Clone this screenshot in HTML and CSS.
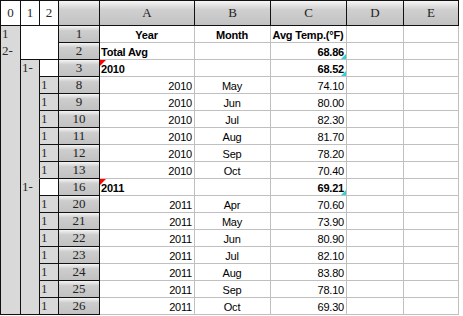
FILE: index.html
```html
<!DOCTYPE html>
<html lang="en">
<head>
    <meta charset="UTF-8">
    <title>Avg Temp</title>
    <link rel="stylesheet" href="styles.css">
</head>
<body>
    <div class="sheet">
        <!-- header row -->
        <div class="lvl">0</div>
        <div class="lvl">1</div>
        <div class="lvl">2</div>
        <div class="hd"></div>
        <div class="hd">A</div>
        <div class="hd">B</div>
        <div class="hd">C</div>
        <div class="hd">D</div>
        <div class="hd">E</div>

        <!-- outline blocks -->
        <div class="ol ol0"><span>1</span><span>2-</span></div>
        <div class="blank top-blank"></div>
        <div class="ol ol1 grp1"><span>1-</span></div>
        <div class="ol ol1 grp2"><span>1-</span></div>

        <!-- sheet row 1 -->
        <div class="rh">1</div>
        <div class="c b m">Year</div>
        <div class="c b m">Month</div>
        <div class="c b m">Avg Temp.(°F)</div>
        <div class="c"></div>
        <div class="c"></div>

        <!-- 2 -->
        <div class="rh">2</div>
        <div class="c b">Total Avg</div>
        <div class="c"></div>
        <div class="c b r tag">68.86</div>
        <div class="c"></div>
        <div class="c"></div>

        <!-- 3 -->
        <div class="blank lv2"></div>
        <div class="rh">3</div>
        <div class="c b note">2010</div>
        <div class="c"></div>
        <div class="c b r tag">68.52</div>
        <div class="c"></div>
        <div class="c"></div>

        <div class="ol lv2">1</div><div class="rh">8</div>
        <div class="c r">2010</div><div class="c m">May</div><div class="c r">74.10</div><div class="c"></div><div class="c"></div>

        <div class="ol lv2">1</div><div class="rh">9</div>
        <div class="c r">2010</div><div class="c m">Jun</div><div class="c r">80.00</div><div class="c"></div><div class="c"></div>

        <div class="ol lv2">1</div><div class="rh">10</div>
        <div class="c r">2010</div><div class="c m">Jul</div><div class="c r">82.30</div><div class="c"></div><div class="c"></div>

        <div class="ol lv2">1</div><div class="rh">11</div>
        <div class="c r">2010</div><div class="c m">Aug</div><div class="c r">81.70</div><div class="c"></div><div class="c"></div>

        <div class="ol lv2">1</div><div class="rh">12</div>
        <div class="c r">2010</div><div class="c m">Sep</div><div class="c r">78.20</div><div class="c"></div><div class="c"></div>

        <div class="ol lv2">1</div><div class="rh">13</div>
        <div class="c r">2010</div><div class="c m">Oct</div><div class="c r">70.40</div><div class="c"></div><div class="c"></div>

        <!-- 16 -->
        <div class="blank lv2"></div>
        <div class="rh">16</div>
        <div class="c b note">2011</div>
        <div class="c"></div>
        <div class="c b r tag">69.21</div>
        <div class="c"></div>
        <div class="c"></div>

        <div class="ol lv2">1</div><div class="rh">20</div>
        <div class="c r">2011</div><div class="c m">Apr</div><div class="c r">70.60</div><div class="c"></div><div class="c"></div>

        <div class="ol lv2">1</div><div class="rh">21</div>
        <div class="c r">2011</div><div class="c m">May</div><div class="c r">73.90</div><div class="c"></div><div class="c"></div>

        <div class="ol lv2">1</div><div class="rh">22</div>
        <div class="c r">2011</div><div class="c m">Jun</div><div class="c r">80.90</div><div class="c"></div><div class="c"></div>

        <div class="ol lv2">1</div><div class="rh">23</div>
        <div class="c r">2011</div><div class="c m">Jul</div><div class="c r">82.10</div><div class="c"></div><div class="c"></div>

        <div class="ol lv2">1</div><div class="rh">24</div>
        <div class="c r">2011</div><div class="c m">Aug</div><div class="c r">83.80</div><div class="c"></div><div class="c"></div>

        <div class="ol lv2">1</div><div class="rh">25</div>
        <div class="c r">2011</div><div class="c m">Sep</div><div class="c r">78.10</div><div class="c"></div><div class="c"></div>

        <div class="ol lv2">1</div><div class="rh">26</div>
        <div class="c r">2011</div><div class="c m">Oct</div><div class="c r">69.30</div><div class="c"></div><div class="c"></div>
    </div>
</body>
</html>
```

FILE: styles.css
```css
*{
    margin: 0;
    padding: 0;
    box-sizing: border-box;
}
body{
    background: #fff;
}
.sheet{
    display: grid;
    grid-template-columns: 20px 19px 19px 41px 95px 76px 76px 57px 55px;
    grid-template-rows: 25px repeat(17, 17px);
    width: max-content;
    border-left: 1px solid #111;
    border-top: 1px solid #111;
}
.sheet > div{
    border-right: 1px solid #111;
    border-bottom: 1px solid #111;
    overflow: hidden;
    white-space: nowrap;
}

/* outline level buttons + column headers */
.lvl{
    background: #fff;
    font: 13px "Liberation Serif", serif;
    color: #2a2a2a;
    text-align: center;
    line-height: 24px;
}
.hd{
    background: linear-gradient(#f6f6f6, #d0d0d0 35%, #c2c2c2);
    font: 13px "Liberation Serif", serif;
    color: #222;
    text-align: center;
    line-height: 24px;
}

/* outline area */
.ol{
    background: #d9d9d9;
    font: 13px "Liberation Serif", serif;
    color: #2a2a2a;
    line-height: 16px;
    padding-left: 1px;
}
.ol span{
    display: block;
    height: 17px;
}
.ol0{
    grid-column: 1;
    grid-row: 2 / 19;
}
.top-blank{
    grid-column: 2 / 4;
    grid-row: 2 / 4;
}
.ol1{
    grid-column: 2;
}
.grp1{
    grid-row: 4 / 11;
    border-bottom-color: #d9d9d9 !important;
}
.grp2{
    grid-row: 11 / 19;
}
.blank{
    background: #fff;
}
.lv2{
    grid-column: 3;
}

/* row headers */
.rh{
    grid-column: 4;
    background: linear-gradient(#f4f4f4, #cdcdcd 30%, #c2c2c2);
    font: 13px "Liberation Serif", serif;
    color: #222;
    text-align: center;
    line-height: 16px;
}

/* data cells */
.sheet > .c{
    border-right-color: #c0c0c0;
    border-bottom-color: #c0c0c0;
    position: relative;
    font: 11px "Liberation Sans", sans-serif;
    letter-spacing: -0.2px;
    color: #000;
    line-height: 16px;
    padding: 1px 2px 0 1px;
}
.b{
    font-weight: bold !important;
}
.r{
    text-align: right;
}
.m{
    text-align: center;
}
.note::before{
    content: "";
    position: absolute;
    left: 0;
    top: 0;
    border-top: 6px solid #f00;
    border-right: 6px solid transparent;
}
.tag::after{
    content: "";
    position: absolute;
    right: 0;
    bottom: 0;
    border-bottom: 5px solid #2ed3d8;
    border-left: 5px solid transparent;
}
```
